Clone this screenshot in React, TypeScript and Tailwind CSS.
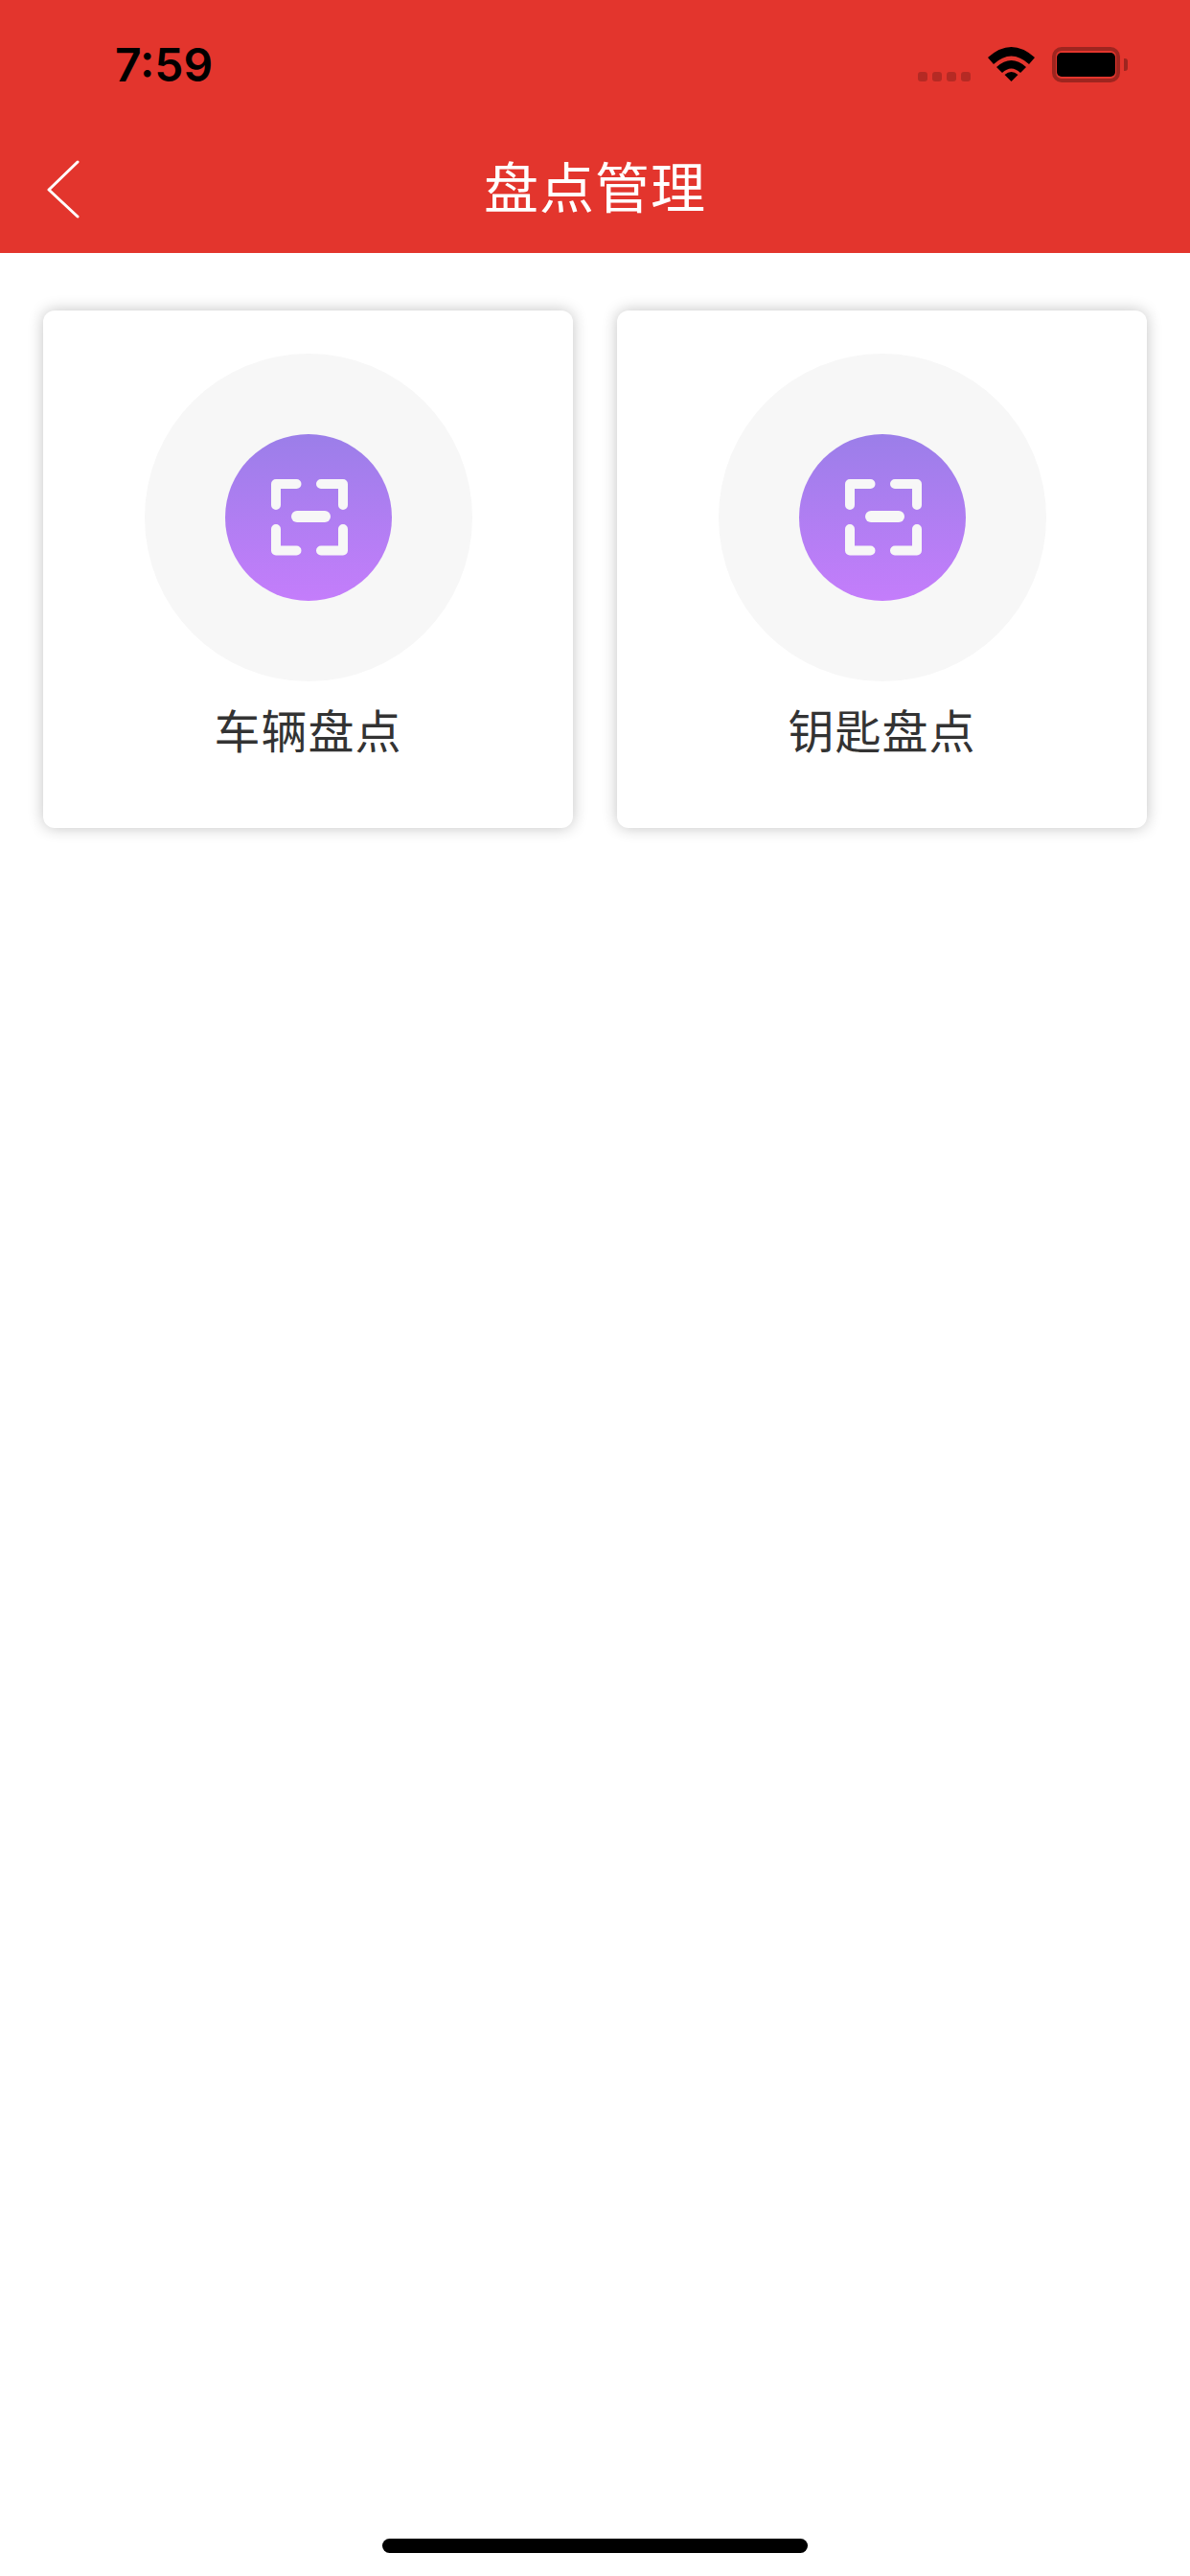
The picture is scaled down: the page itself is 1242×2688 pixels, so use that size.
import React from "react";

const cards = ["车辆盘点", "钥匙盘点"];

const ScanIcon = () => (
  <svg className="ml-[2px]" width="80" height="80" viewBox="0 0 80 80" fill="none">
    <g stroke="#f7f7f7" strokeWidth="10" strokeLinecap="round" strokeLinejoin="round">
      <path d="M5 27V5H26.5" />
      <path d="M52 5H75V27" />
      <path d="M5 52V74.5H26.5" />
      <path d="M52 74.5H75V52" />
    </g>
    <path d="M27 39H56" stroke="#f7f7f7" strokeWidth="12" strokeLinecap="round" />
  </svg>
);

const StatusIcons = () => (
  <div className="flex items-start">
    <div className="mt-[26px] flex gap-[5px]">
      <div className="h-[10px] w-[10px] rounded-[3px] bg-black/20" />
      <div className="h-[10px] w-[10px] rounded-[3px] bg-black/20" />
      <div className="h-[10px] w-[10px] rounded-[3px] bg-black/20" />
      <div className="h-[10px] w-[10px] rounded-[3px] bg-black/20" />
    </div>
    <svg className="ml-[18px]" width="49" height="36" viewBox="0 0 49 36" fill="#000">
      <path d="M0 11Q24.5 -11 49 11L43 18Q24.5 1 6 18Z" />
      <path d="M9 21Q24.5 7 40 21L34 27Q24.5 18 15 27Z" />
      <path d="M17.5 29Q24.5 23 31.5 29L24.5 36Z" />
    </svg>
    <div className="ml-[18px] flex h-[37px] w-[71px] items-center justify-center rounded-[10px] border-[4px] border-black/30">
      <div className="h-[25px] w-[61px] rounded-[5px] bg-black" />
    </div>
    <div className="mt-[12px] ml-[4px] h-[13px] w-[4px] rounded-r-[3px] bg-black/30" />
  </div>
);

export default function App() {
  return (
    <div className="flex h-[2688px] flex-col bg-white font-['Noto_Sans_CJK_SC','Noto_Sans',sans-serif]">
      <header className="bg-[#e3352d]">
        <div className="flex h-[132px] items-start justify-between pr-[65px] pl-[120px]">
          <span className="mt-[38px] font-['Inter',sans-serif] text-[48px] leading-[60px] font-semibold text-black">
            7:59
          </span>
          <div className="mt-[49px]">
            <StatusIcons />
          </div>
        </div>
        <div className="relative flex h-[132px] items-center justify-center">
          <svg className="absolute top-[34px] left-[49px]" width="34" height="62" viewBox="0 0 34 62" fill="none">
            <path d="M32 3L2 32L32 60" stroke="#fff" strokeWidth="3" strokeLinecap="round" strokeLinejoin="round" />
          </svg>
          <h1 className="pb-[12px] text-[57px] leading-none font-normal tracking-[1px] text-white">盘点管理</h1>
        </div>
      </header>

      <main className="grid grid-cols-2 gap-[46px] px-[45px] pt-[60px]">
        {cards.map((label) => (
          <div
            key={label}
            className="flex h-[540px] flex-col items-center rounded-[12px] bg-white pt-[45px] shadow-[0_0_16px_rgba(0,0,0,0.24)]"
          >
            <div className="flex h-[342px] w-[342px] items-center justify-center rounded-full bg-[#f7f7f7]">
              <div className="flex h-[174px] w-[174px] items-center justify-center rounded-full bg-linear-to-b from-[#9b7ee9] to-[#c47dfb]">
                <ScanIcon />
              </div>
            </div>
            <p className="mt-[17px] text-[48px] leading-[64px] tracking-[1px] text-[#333333]">{label}</p>
          </div>
        ))}
      </main>

      <div className="mt-auto flex justify-center pb-[24px]">
        <div className="h-[15px] w-[444px] rounded-full bg-black" />
      </div>
    </div>
  );
}
